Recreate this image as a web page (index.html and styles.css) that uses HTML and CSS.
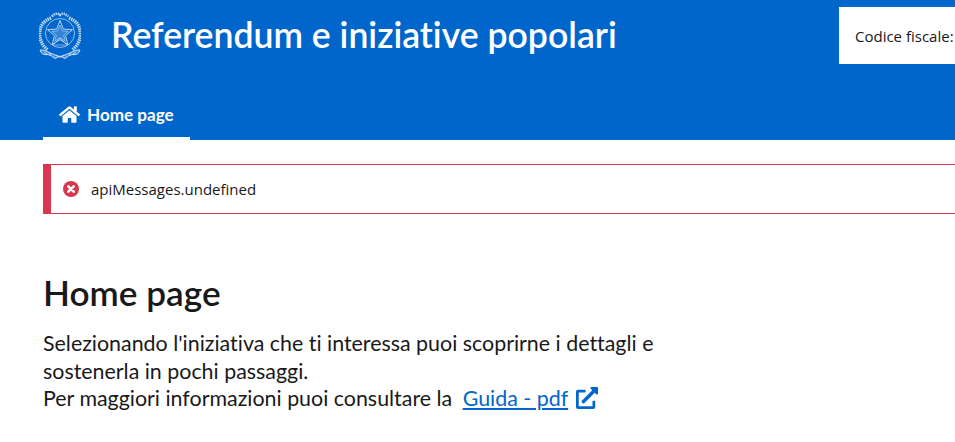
FILE: index.html
```html
<!DOCTYPE html>
<html lang="it">
<head>
<meta charset="utf-8">
<title>Referendum e iniziative popolari</title>
<link rel="stylesheet" href="styles.css">
</head>
<body>
<header class="header">
  <div class="brand-row">
    <svg class="emblem" viewBox="0 0 42 47" aria-hidden="true">
      <g fill="none" stroke="#cfe2f8" stroke-width=".7">
        <path d="M12 6C4 9 0 15 .8 24c.5 6 4 11 8 14" stroke-width="3.400" stroke-dasharray="1.400 .8"/>
        <path d="M30 6c8 3 12 9 11.200 18-.5 6-4 11-8 14" stroke-width="3.400" stroke-dasharray="1.400 .8"/>
        <path d="M13 4.500C16 1 19 1 21 3c2-2 5-2 8 1.500" stroke-width="2.400" stroke-dasharray="1.400 .8"/>
        <circle cx="21" cy="21" r="14.500"/>
        <path d="M21 8.500l3.400 8.600 9.100.6-7 5.900 2.300 8.900-7.800-4.900-7.800 4.900 2.300-8.900-7-5.900 9.100-.6z" stroke-width=".9"/>
        <path d="M21 13l2.300 5.800 6.100.4-4.700 3.900 1.500 6-5.200-3.300-5.200 3.300 1.500-6-4.700-3.900 6.100-.4z" stroke-width=".6" fill="#fff" fill-opacity=".2"/>
        <path d="M21 26l-7 7h14z" stroke-width=".6"/>
        <path d="M1 38c3 0 6 .5 9 2.500l11 4.500 11-4.500c3-2 6-2.500 9-2.500-1 3-3 5-6 4.500-3 0-5 1-7 2.500l-2 1.500-5-2.500-5 2.500-2-1.500c-2-1.500-4-2.500-7-2.500-3 .5-5-1.500-6-4.500z" stroke-width="1" fill="#fff" fill-opacity=".25"/>
        <path d="M5 40l3 2M10 41l2 2M37 40l-3 2M32 41l-2 2M17 43l4 2 4-2" stroke-width=".8"/>
      </g>
    </svg>
    <h1 class="site-title">Referendum e iniziative popolari</h1>
    <div class="user-box">Codice fiscale:</div>
  </div>
  <nav class="nav">
    <a class="nav-item" href="#">
      <svg class="nav-icon" viewBox="0 0 576 512" aria-hidden="true"><path fill="#fff" d="M280.370 148.260 96 300.110V464a16 16 0 0 0 16 16l112.060-.29a16 16 0 0 0 15.920-16V368a16 16 0 0 1 16-16h64a16 16 0 0 1 16 16v95.640a16 16 0 0 0 16 16.050L464 480a16 16 0 0 0 16-16V300L295.670 148.260a12.190 12.190 0 0 0-15.300 0zM571.600 251.470 488 182.560V44.050a12 12 0 0 0-12-12h-56a12 12 0 0 0-12 12v72.610L318.470 43a48 48 0 0 0-61 0L4.340 251.470a12 12 0 0 0-1.600 16.900l25.500 31A12 12 0 0 0 45.150 301l235.220-193.740a12.190 12.190 0 0 1 15.300 0L530.900 301a12 12 0 0 0 16.900-1.600l25.500-31a12 12 0 0 0-1.700-16.930z"/></svg>
      <span>Home page</span>
    </a>
  </nav>
</header>
<main class="main">
  <div class="alert">
    <svg class="alert-icon" viewBox="0 0 16 16" aria-hidden="true"><circle cx="8" cy="8" r="8" fill="#d9364f"/><path d="M5.300 5.300l5.400 5.400M10.700 5.300l-5.400 5.400" stroke="#fff" stroke-width="2.600" stroke-linecap="round"/></svg>
    <span>apiMessages.undefined</span>
  </div>
  <h2 class="page-title">Home page</h2>
  <p class="intro">Selezionando l'iniziativa che ti interessa puoi scoprirne i dettagli e<br>sostenerla in pochi passaggi.<br>Per maggiori informazioni puoi consultare la <a class="guide" href="#">Guida - pdf</a><svg class="ext-icon" viewBox="0 0 512 512" aria-hidden="true"><path fill="#0066cc" d="M432 320h-32a16 16 0 0 0-16 16v112H64V128h144a16 16 0 0 0 16-16V80a16 16 0 0 0-16-16H48a48 48 0 0 0-48 48v352a48 48 0 0 0 48 48h352a48 48 0 0 0 48-48V336a16 16 0 0 0-16-16zM488 0H360c-21.370 0-32.050 25.910-17 41l35.730 35.730L135 320.370a24 24 0 0 0 0 34L157.670 377a24 24 0 0 0 34 0l243.610-243.680L471 169c15 15 41 4.500 41-17V24a24 24 0 0 0-24-24z"/></svg></p>
</main>
</body>
</html>
```
FILE: styles.css
```css
html, body {
  margin: 0;
  padding: 0;
  background: #fff;
  overflow: hidden;
}
body {
  width: 955px;
  height: 442px;
  font-family: "Lato", "Noto Sans", sans-serif;
  font-variant-ligatures: none;
  color: #19191a;
}
.header {
  background: #0066cc;
  height: 140px;
  padding-left: 43px;
  box-sizing: border-box;
  overflow: hidden;
}
.brand-row {
  display: flex;
  align-items: flex-start;
  height: 98px;
}
.emblem {
  width: 42px;
  height: 47px;
  margin: 12px 30px 0 -4px;
  flex: none;
}
.site-title {
  margin: 12px 0 0;
  font-size: 35.600px;
  line-height: 45px;
  font-weight: 600;
  color: #fff;
  white-space: nowrap;
  flex: none;
  width: 728px;
}
.user-box {
  flex: none;
  width: 200px;
  height: 57px;
  margin-top: 7px;
  box-sizing: border-box;
  padding: 19px 16px 0;
  background: #fff;
  font-family: "Open Sans", sans-serif;
  font-size: 15px;
  line-height: 20px;
  color: #19191a;
  white-space: nowrap;
}
.nav {
  display: flex;
}
.nav-item {
  display: flex;
  align-items: center;
  gap: 7px;
  width: 147px;
  height: 42px;
  box-sizing: border-box;
  padding: 0 16px 6px;
  border-bottom: 3px solid #fff;
  color: #fff;
  text-decoration: none;
  font-size: 17.100px;
  font-weight: 700;
  white-space: nowrap;
}
.nav-icon {
  width: 21px;
  height: 19px;
  flex: none;
}
.main {
  padding: 24px 0 0 43px;
  width: 1000px;
}
.alert {
  display: flex;
  align-items: center;
  gap: 12px;
  height: 50px;
  box-sizing: border-box;
  padding-left: 12px;
  border: 1px solid #d9364f;
  border-left: 8px solid #d9364f;
  font-family: "Open Sans", sans-serif;
  font-size: 15px;
  color: #19191a;
}
.alert-icon {
  width: 16px;
  height: 16px;
  flex: none;
}
.page-title {
  margin: 54px 0 0;
  font-size: 35.200px;
  line-height: 48px;
  font-weight: 600;
  color: #19191a;
}
.intro {
  margin: 14px 0 0;
  font-size: 21.400px;
  line-height: 27.500px;
  color: #19191a;
  white-space: nowrap;
}
.guide {
  margin-left: 5px;
  color: #0066cc;
}
.ext-icon {
  width: 22px;
  height: 22px;
  margin-left: 8px;
  vertical-align: -3px;
}
```
